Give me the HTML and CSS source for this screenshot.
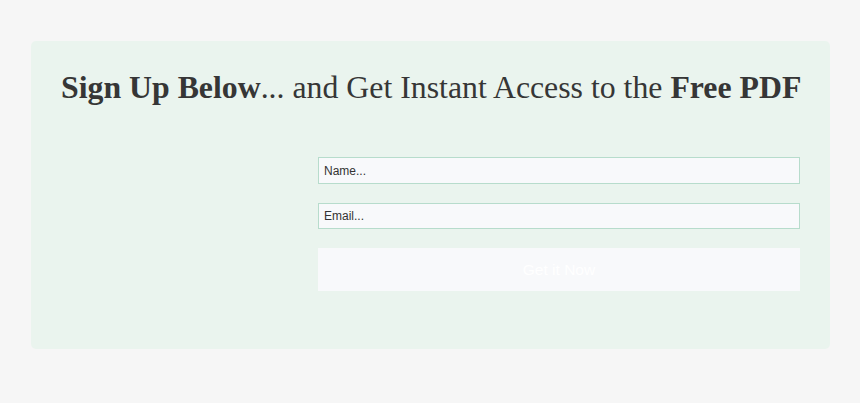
FILE: index.html
```html
<!DOCTYPE html>
<html>
<head>
<meta charset="utf-8">
<link rel="stylesheet" href="styles.css">
</head>
<body>
<div class="card">
  <h1 class="title"><b>Sign Up Below</b>... and Get Instant Access to the <b>Free PDF</b></h1>
  <form class="form">
    <input class="field" type="text" placeholder="Name...">
    <input class="field" type="text" placeholder="Email...">
    <button class="btn" type="button">Get it Now</button>
  </form>
</div>
</body>
</html>
```

FILE: styles.css
```css
html, body {
  margin: 0;
  padding: 0;
  background: #f6f6f6;
}
body {
  padding: 41px 30px 0 31px;
  height: 403px;
  box-sizing: border-box;
}
.card {
  width: 799px;
  height: 308px;
  box-sizing: border-box;
  background: #eaf4ee;
  border-radius: 5px;
  padding: 27px 30px 0 30px;
}
.title {
  margin: 0;
  font-family: "Liberation Serif", "Times New Roman", serif;
  font-weight: normal;
  font-size: 31.8px;
  line-height: 40px;
  color: #363636;
  text-align: center;
  white-space: nowrap;
}
.title b {
  font-weight: bold;
}
.form {
  margin: 49px 0 0 257px;
  display: flex;
  flex-direction: column;
}
.field {
  height: 27px;
  box-sizing: border-box;
  border: 1px solid #b7dccc;
  background: #f8f9fb;
  padding: 0 5px;
  font-family: "Liberation Sans", Arial, sans-serif;
  font-size: 12px;
  color: #333;
  margin: 0 0 19px 0;
  outline: none;
}
.field::placeholder {
  color: #333;
  opacity: 1;
}
.field + .field {
  height: 26px;
}
.btn {
  height: 43px;
  border: none;
  background: #f8f9fb;
  color: #ffffff;
  font-family: "Liberation Sans", Arial, sans-serif;
  font-size: 15.5px;
  padding: 0;
  margin: 0;
}
```
